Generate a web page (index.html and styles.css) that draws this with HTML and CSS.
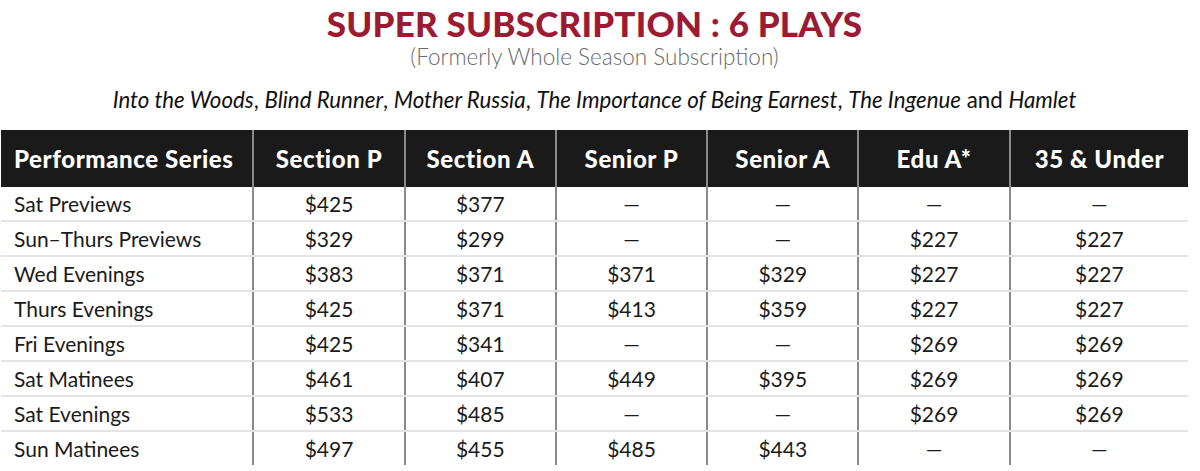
FILE: index.html
```html
<!DOCTYPE html>
<html>
<head>
<meta charset="utf-8">
<link rel="stylesheet" href="styles.css">
</head>
<body>
<div class="page">
  <h1 class="title">SUPER SUBSCRIPTION : 6 PLAYS</h1>
  <p class="subtitle">(Formerly Whole Season Subscription)</p>
  <p class="plays"><i>Into the Woods</i>, <i>Blind Runner</i>, <i>Mother Russia</i>, <i>The Importance of Being Earnest</i>, <i>The Ingenue</i> and <i>Hamlet</i></p>
  <table class="prices">
    <colgroup>
      <col class="c-series"><col class="c-num"><col class="c-num"><col class="c-num"><col class="c-num"><col class="c-num"><col class="c-last">
    </colgroup>
    <thead>
      <tr><th class="series">Performance Series</th><th>Section P</th><th>Section A</th><th>Senior P</th><th>Senior A</th><th>Edu A*</th><th>35 &amp; Under</th></tr>
    </thead>
    <tbody>
      <tr><td class="series">Sat Previews</td><td>$425</td><td>$377</td><td>—</td><td>—</td><td>—</td><td>—</td></tr>
      <tr><td class="series">Sun–Thurs Previews</td><td>$329</td><td>$299</td><td>—</td><td>—</td><td>$227</td><td>$227</td></tr>
      <tr><td class="series">Wed Evenings</td><td>$383</td><td>$371</td><td>$371</td><td>$329</td><td>$227</td><td>$227</td></tr>
      <tr><td class="series">Thurs Evenings</td><td>$425</td><td>$371</td><td>$413</td><td>$359</td><td>$227</td><td>$227</td></tr>
      <tr><td class="series">Fri Evenings</td><td>$425</td><td>$341</td><td>—</td><td>—</td><td>$269</td><td>$269</td></tr>
      <tr><td class="series">Sat Matinees</td><td>$461</td><td>$407</td><td>$449</td><td>$395</td><td>$269</td><td>$269</td></tr>
      <tr><td class="series">Sat Evenings</td><td>$533</td><td>$485</td><td>—</td><td>—</td><td>$269</td><td>$269</td></tr>
      <tr><td class="series">Sun Matinees</td><td>$497</td><td>$455</td><td>$485</td><td>$443</td><td>—</td><td>—</td></tr>
    </tbody>
  </table>
</div>
</body>
</html>
```

FILE: styles.css
```css
html, body {
  margin: 0;
  padding: 0;
  background: #ffffff;
}
body {
  font-family: "Lato", "Liberation Sans", sans-serif;
  color: #1a1a1a;
}
.page {
  width: 1187px;
  padding-left: 1px;
}
.title {
  margin: 0;
  padding-top: 4px;
  text-align: center;
  font-size: 35px;
  line-height: 38px;
  font-weight: 900;
  color: #9c1b32;
  letter-spacing: 0.2px;
}
.subtitle {
  margin: 0;
  padding-top: 1px;
  text-align: center;
  font-size: 22.5px;
  line-height: 28px;
  font-weight: 300;
  color: #6a6a6a;
}
.plays {
  margin: 0;
  padding-top: 16px;
  text-align: center;
  font-size: 22.3px;
  line-height: 26px;
  color: #111;
}
.prices {
  margin-top: 17px;
  border-collapse: collapse;
  table-layout: fixed;
  width: 1187px;
}
.c-series { width: 252px; }
.c-num { width: 151px; }
.c-last { width: 178px; }
.prices th {
  background: #1b1a1a;
  color: #fff;
  font-weight: 900;
  font-size: 24px;
  height: 57px;
  padding: 0;
  text-align: center;
  border-left: 2px solid #8a8a8a;
  letter-spacing: 0.6px;
}
.prices td {
  height: 33px;
  padding: 0;
  font-size: 21px;
  text-align: center;
  border-left: 2px solid #8a8a8a;
  border-bottom: 2px solid #e4e4e4;
}
.prices tbody tr:last-child td {
  border-bottom: none;
}
.prices th.series,
.prices td.series {
  border-left: none;
  text-align: left;
  padding-left: 13px;
}
```
